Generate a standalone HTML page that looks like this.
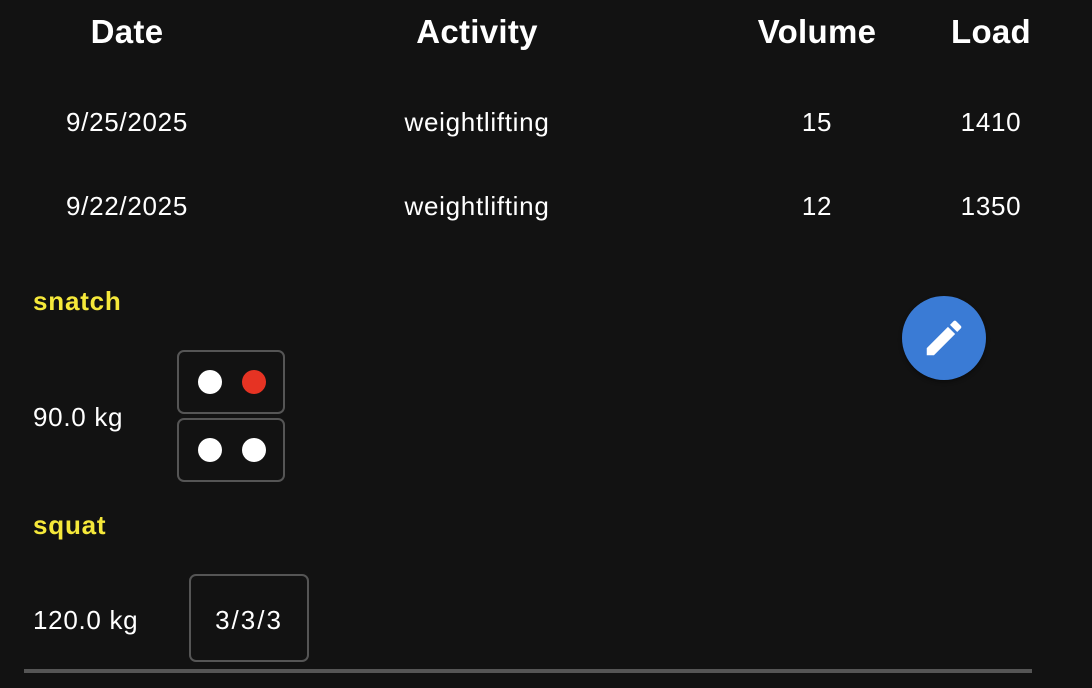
<!DOCTYPE html>
<html><head><style>
html,body{margin:0;padding:0;background:#121212;width:1092px;height:688px;overflow:hidden;font-family:"Liberation Sans",sans-serif;color:#fff}
.t{position:absolute;white-space:nowrap;transform:translateX(-50%)}
.h{font-size:33px;font-weight:bold;top:13px;letter-spacing:0.3px}
.r{font-size:26px;letter-spacing:0.7px}
.l{position:absolute;white-space:nowrap}
.y{color:#f5e83a;font-weight:bold;font-size:26px;letter-spacing:0.8px}
.box{position:absolute;border:2px solid #555;border-radius:7px;box-sizing:border-box}
.dot{position:absolute;width:24px;height:24px;border-radius:50%;background:#fff;top:18px}
</style></head><body>
<div class="t h" style="left:127px">Date</div>
<div class="t h" style="left:477px">Activity</div>
<div class="t h" style="left:817px">Volume</div>
<div class="t h" style="left:991px">Load</div>

<div class="t r" style="left:127px;top:107px">9/25/2025</div>
<div class="t r" style="left:477px;top:107px">weightlifting</div>
<div class="t r" style="left:817px;top:107px">15</div>
<div class="t r" style="left:991px;top:107px">1410</div>
<div class="t r" style="left:127px;top:191px">9/22/2025</div>
<div class="t r" style="left:477px;top:191px">weightlifting</div>
<div class="t r" style="left:817px;top:191px">12</div>
<div class="t r" style="left:991px;top:191px">1350</div>

<div class="l y" style="left:33px;top:286px">snatch</div>
<div class="l r" style="left:33px;top:402px">90.0 kg</div>
<div class="box" style="left:177px;top:350px;width:108px;height:64px"><div class="dot" style="left:19px"></div><div class="dot" style="left:63px;background:#e63323"></div></div>
<div class="box" style="left:177px;top:418px;width:108px;height:64px"><div class="dot" style="left:19px"></div><div class="dot" style="left:63px"></div></div>

<div class="l y" style="left:33px;top:510px">squat</div>
<div class="l r" style="left:33px;top:605px">120.0 kg</div>
<div class="box" style="left:189px;top:574px;width:120px;height:88px"><div class="l r" style="left:0;right:0;text-align:center;top:29px;letter-spacing:2px">3/3/3</div></div>

<div style="position:absolute;left:24px;top:669px;width:1008px;height:4px;background:#555"></div>

<div style="position:absolute;left:902px;top:296px;width:84px;height:84px;border-radius:50%;background:#3a7bd5;box-shadow:0 2px 4px rgba(0,0,0,.4)">
<svg width="46" height="46" viewBox="0 0 24 24" style="position:absolute;left:19px;top:19px"><path fill="#fff" d="M3 17.25V21h3.75L17.81 9.94l-3.75-3.75L3 17.25zM20.71 7.04a1 1 0 0 0 0-1.41l-2.34-2.34a1 1 0 0 0-1.41 0l-1.83 1.83 3.75 3.75 1.83-1.83z"/></svg>
</div>
</body></html>
